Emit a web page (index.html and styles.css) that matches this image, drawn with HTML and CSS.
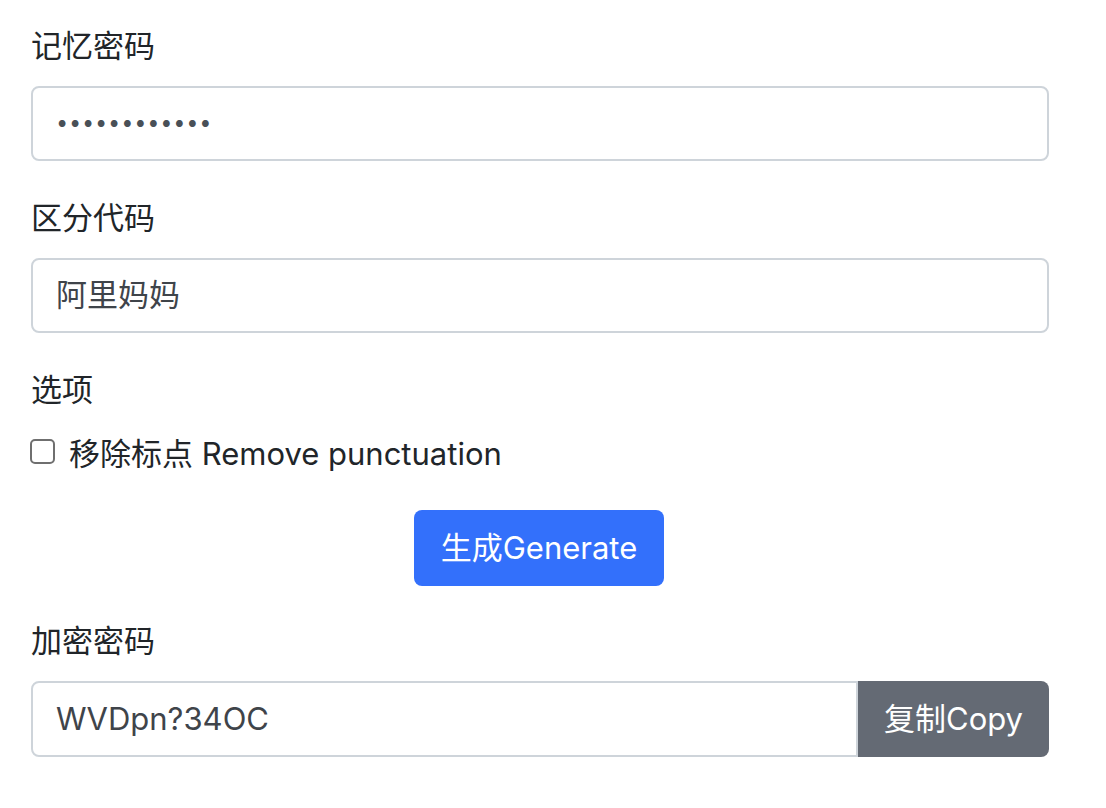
FILE: index.html
```html
<!DOCTYPE html>
<html lang="zh-CN">
<head>
<meta charset="utf-8">
<title>密码生成</title>
<link rel="stylesheet" href="styles.css">
</head>
<body>
<form class="form">
  <div class="field">
    <label class="label">记忆密码</label>
    <div class="control control-pw">●●●●●●●●●●●●</div>
  </div>
  <div class="field">
    <label class="label">区分代码</label>
    <div class="control">阿里妈妈</div>
  </div>
  <div class="field field-options">
    <label class="label">选项</label>
    <div class="check-row">
      <span class="checkbox"></span>
      <span class="check-text">移除标点 Remove punctuation</span>
    </div>
  </div>
  <div class="actions">
    <button type="button" class="btn btn-primary">生成Generate</button>
  </div>
  <div class="field">
    <label class="label">加密密码</label>
    <div class="input-group">
      <div class="control group-input">WVDpn?34OC</div>
      <button type="button" class="btn btn-secondary">复制Copy</button>
    </div>
  </div>
</form>
</body>
</html>
```

FILE: styles.css
```css
* { box-sizing: border-box; }
html, body { margin: 0; background: #fff; }
body {
  font-family: "Inter", "Noto Sans CJK SC", sans-serif;
  font-size: 31px;
  line-height: 1.5;
  color: #212529;
}
.form {
  width: 1018px;
  margin: 0 0 0 31px;
  padding-top: 23px;
}
.field { margin-bottom: 34px; }
.label {
  display: block;
  margin-bottom: 17px;
  line-height: 46px;
}
.control {
  height: 75px;
  border: 2px solid #ced4da;
  border-radius: 8px;
  padding: 0 23px;
  display: flex;
  align-items: center;
  color: #3f444a;
  background: #fff;
}
.control-pw {
  font-size: 9px;
  letter-spacing: 4.8px;
  color: #495057;
  padding-left: 25px;
}
.check-row {
  display: flex;
  align-items: center;
  height: 46px;
  margin-top: -2px;
}
.checkbox {
  width: 25px;
  height: 25px;
  border: 2px solid #6f6f6f;
  border-radius: 5px;
  margin-left: -1px;
  margin-right: 14px;
  flex: none;
}
.check-text {
  color: #212529;
  margin-top: 6px;
}
.field-options { margin-bottom: 36px; }
.actions {
  display: flex;
  justify-content: center;
  margin-bottom: 32px;
  padding-right: 2px;
}
.btn {
  font-family: inherit;
  font-size: 31px;
  line-height: 1.5;
  border: none;
  color: #fff;
  cursor: pointer;
}
.btn-primary {
  width: 250px;
  height: 76px;
  background: #3370fb;
  border-radius: 8px;
}
.input-group {
  display: flex;
  height: 76px;
}
.group-input {
  flex: 1;
  height: 76px;
  border-radius: 8px 0 0 8px;
}
.btn-secondary {
  width: 191px;
  height: 76px;
  background: #646a74;
  border-radius: 0 8px 8px 0;
  padding: 0;
}
```
